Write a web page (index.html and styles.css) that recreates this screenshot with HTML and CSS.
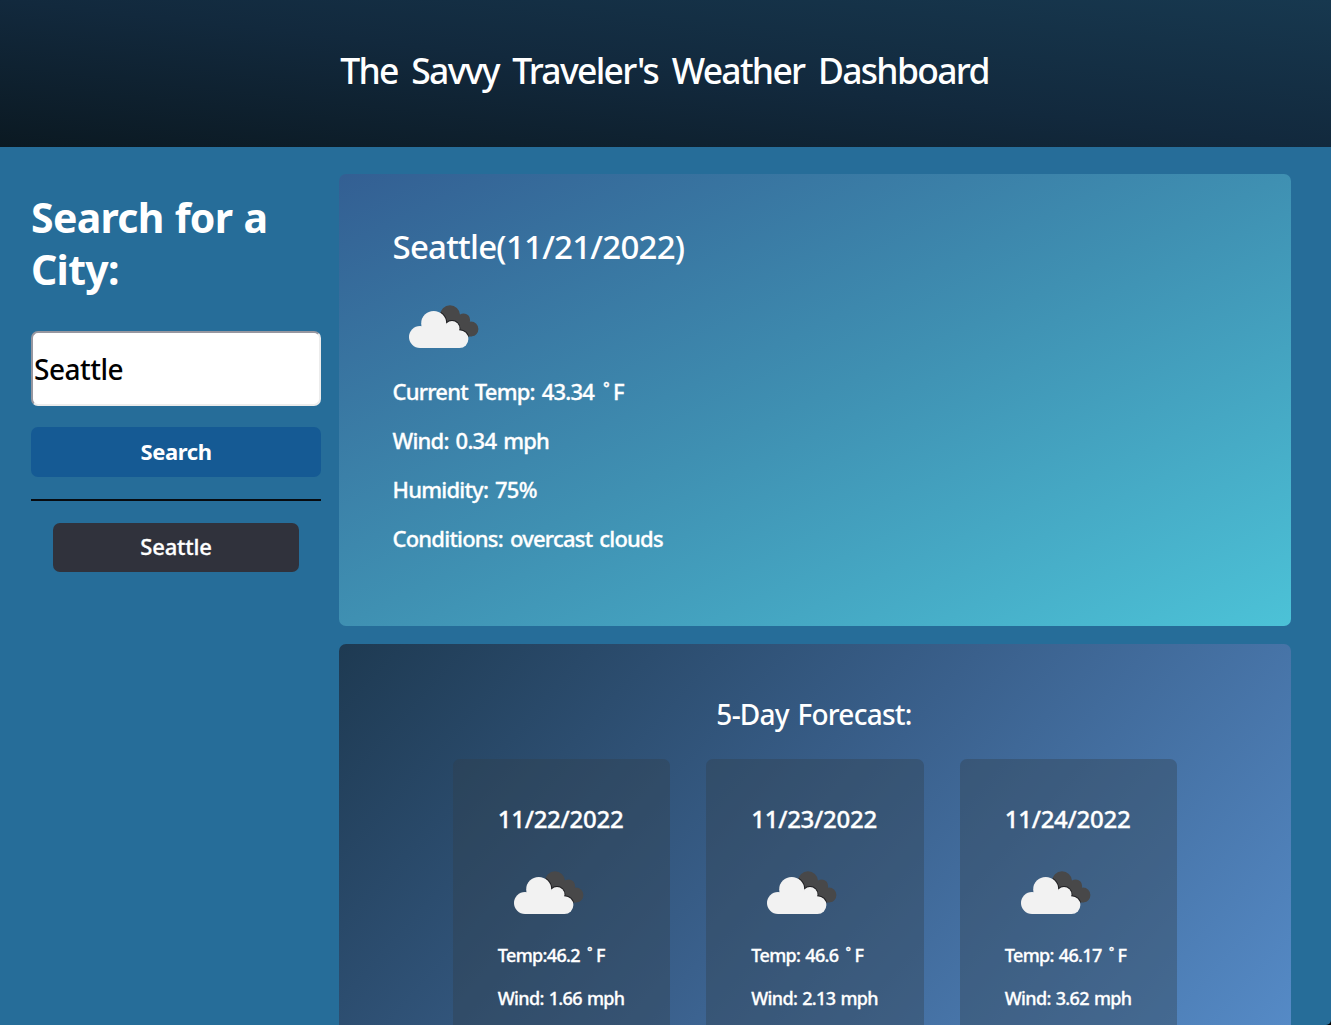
FILE: index.html
```
<!DOCTYPE html>
<html lang="en">
<head>
<meta charset="utf-8">
<title>The Savvy Traveler's Weather Dashboard</title>
<link rel="stylesheet" href="styles.css">
</head>
<body>
<svg class="sprite" width="0" height="0" aria-hidden="true">
  <defs>
    <clipPath id="back-cloud">
      <circle cx="57" cy="38.200" r="10"/>
      <circle cx="70.700" cy="42.800" r="6.400"/>
      <circle cx="78" cy="52" r="7.400"/>
      <path d="M50 40H72L79 59.400H60z"/>
    </clipPath>
    <g id="front-cloud">
      <circle cx="27" cy="60" r="11"/>
      <circle cx="40.700" cy="46.400" r="12.500"/>
      <circle cx="59" cy="51.500" r="7.500"/>
      <circle cx="66.500" cy="62.100" r="8.900"/>
      <path d="M27 71V50H52L66.500 56V71z"/>
    </g>
  </defs>
  <symbol id="clouds" viewBox="0 0 100 100">
    <g clip-path="url(#back-cloud)">
      <rect width="100" height="100" fill="#484849"/>
      <use href="#front-cloud" fill="#1f1f22" stroke="#1f1f22" stroke-width="2"/>
    </g>
    <use href="#front-cloud" fill="#f2f2f2"/>
  </symbol>
</svg>
<header class="header"><h1 class="title">The Savvy Traveler's Weather Dashboard</h1></header>
<main class="layout">
  <aside class="sidebar">
    <h2 class="sidebar-title">Search for a City:</h2>
    <input class="city-input" type="text" value="Seattle" aria-label="City">
    <button class="search-button">Search</button>
    <hr class="divider">
    <button class="history-button">Seattle</button>
  </aside>
  <div class="content">
    <section class="current">
      <h2 class="current-title">Seattle(11/21/2022)</h2>
      <svg class="icon"><use href="#clouds"/></svg>
      <p>Current Temp: 43.34 <span class="degree">˚</span>F</p>
      <p>Wind: 0.34 mph</p>
      <p>Humidity: 75%</p>
      <p>Conditions: overcast clouds</p>
    </section>
    <section class="forecast">
      <h2 class="forecast-title">5-Day Forecast:</h2>
      <div class="cards">
        <article class="card">
          <h3 class="date">11/22/2022</h3>
          <svg class="icon"><use href="#clouds"/></svg>
          <p>Temp:46.2 <span class="degree">˚</span>F</p>
          <p>Wind: 1.66 mph</p>
        </article>
        <article class="card">
          <h3 class="date">11/23/2022</h3>
          <svg class="icon"><use href="#clouds"/></svg>
          <p>Temp: 46.6 <span class="degree">˚</span>F</p>
          <p>Wind: 2.13 mph</p>
        </article>
        <article class="card">
          <h3 class="date">11/24/2022</h3>
          <svg class="icon"><use href="#clouds"/></svg>
          <p>Temp: 46.17 <span class="degree">˚</span>F</p>
          <p>Wind: 3.62 mph</p>
        </article>
      </div>
    </section>
  </div>
</main>
</body>
</html>
```
FILE: styles.css
```
* { box-sizing: border-box; }
html { background: #000; overflow: hidden; }
body {
  margin: 0;
  height: 100vh;
  display: flex;
  flex-direction: column;
  overflow: hidden;
  background: #266d99;
  border-bottom-right-radius: 5px;
  color: #fff;
  font-family: "Trebuchet MS", "Noto Sans", sans-serif;
  font-weight: 500;
}
h1, h2, h3, p { margin: 0; font-weight: 500; }
.sprite { position: absolute; }
.header {
  flex: none;
  height: 147px;
  padding: 0 2px 8px 0;
  display: flex;
  align-items: center;
  justify-content: center;
  background: linear-gradient(to top right, #0b1922, #12293d 50%, #17384f);
}
.title { font-size: 35.5px; letter-spacing: -1.7px; word-spacing: 6px; }
.layout {
  flex: 1;
  min-height: 0;
  display: grid;
  grid-template-columns: 290px 952px;
  grid-template-rows: minmax(0, 1fr);
  gap: 18px;
  padding: 27px 0 0 31px;
}
.sidebar { display: flex; flex-direction: column; padding-top: 17px; }
.sidebar-title {
  margin-bottom: 36px;
  font-size: 41px;
  font-weight: 700;
  line-height: 52px;
  letter-spacing: -0.7px;
  word-spacing: 1px;
}
.city-input, .search-button, .history-button {
  flex: none;
  border-radius: 7px;
  font-family: inherit;
}
.city-input {
  width: 290px;
  height: 75px;
  padding: 0 1px;
  border: 2px solid;
  border-color: #9797a0 #ececec #ececec #9797a0;
  background: #fff;
  color: #000;
  font-size: 28px;
  font-weight: 500;
  letter-spacing: -0.5px;
}
.search-button {
  height: 50px;
  margin-top: 21px;
  padding: 0 0 2px;
  border: 0;
  background: #155a94;
  color: #fff;
  font-size: 22px;
  font-weight: 700;
  letter-spacing: -0.4px;
}
.divider { width: 100%; height: 2px; margin: 22px 0; border: 0; background: #070b10; }
.history-button {
  height: 49px;
  margin: 0 22px;
  padding: 0 0 3px;
  border: 0;
  background: #30323c;
  color: #fff;
  font-size: 22px;
  font-weight: 500;
  letter-spacing: -0.2px;
  -webkit-text-stroke: 0.3px;
}
.content { display: flex; flex-direction: column; gap: 18px; min-height: 0; }
.current {
  flex: none;
  height: 452px;
  padding: 54px 54px 0 53.5px;
  border-radius: 7px;
  background: linear-gradient(to bottom right, #335f93, #3f90b2 50%, #4cc2d7);
}
.current-title { font-size: 33px; line-height: 38px; letter-spacing: -0.75px; }
.icon { display: block; width: 100px; height: 100px; margin-top: 11px; }
.current p {
  margin: 2px 0 24px;
  font-size: 22px;
  line-height: 25px;
  letter-spacing: -0.78px;
  word-spacing: 2px;
  -webkit-text-stroke: 0.3px;
}
.current p + p { margin-top: 0; }
.degree { padding: 0 4px 0 2px; }
.forecast {
  flex: 1;
  min-height: 0;
  display: flex;
  flex-direction: column;
  padding-top: 54px;
  border-radius: 7px 7px 0 0;
  background: linear-gradient(132deg, #1e3a52, #3a608c 50%, #558ac6);
}
.forecast-title {
  margin-bottom: 29px;
  padding-right: 2px;
  text-align: center;
  font-size: 28px;
  line-height: 32px;
  letter-spacing: -0.75px;
  word-spacing: 2px;
}
.cards { flex: 1; min-height: 0; display: flex; justify-content: center; gap: 36px; }
.card {
  width: 217.5px;
  padding: 46px 0 0 45px;
  border-radius: 7px 7px 0 0;
  background: rgba(50, 62, 72, 0.37);
}
.date { font-size: 24px; line-height: 28px; letter-spacing: -0.27px; -webkit-text-stroke: 0.3px; }
.card .icon { margin-top: 10px; }
.card p {
  margin: 2px 0 22px;
  font-size: 18px;
  line-height: 21px;
  letter-spacing: -0.65px;
  word-spacing: 1px;
  -webkit-text-stroke: 0.3px;
}
.card p:last-child { margin-bottom: 0; }
```
